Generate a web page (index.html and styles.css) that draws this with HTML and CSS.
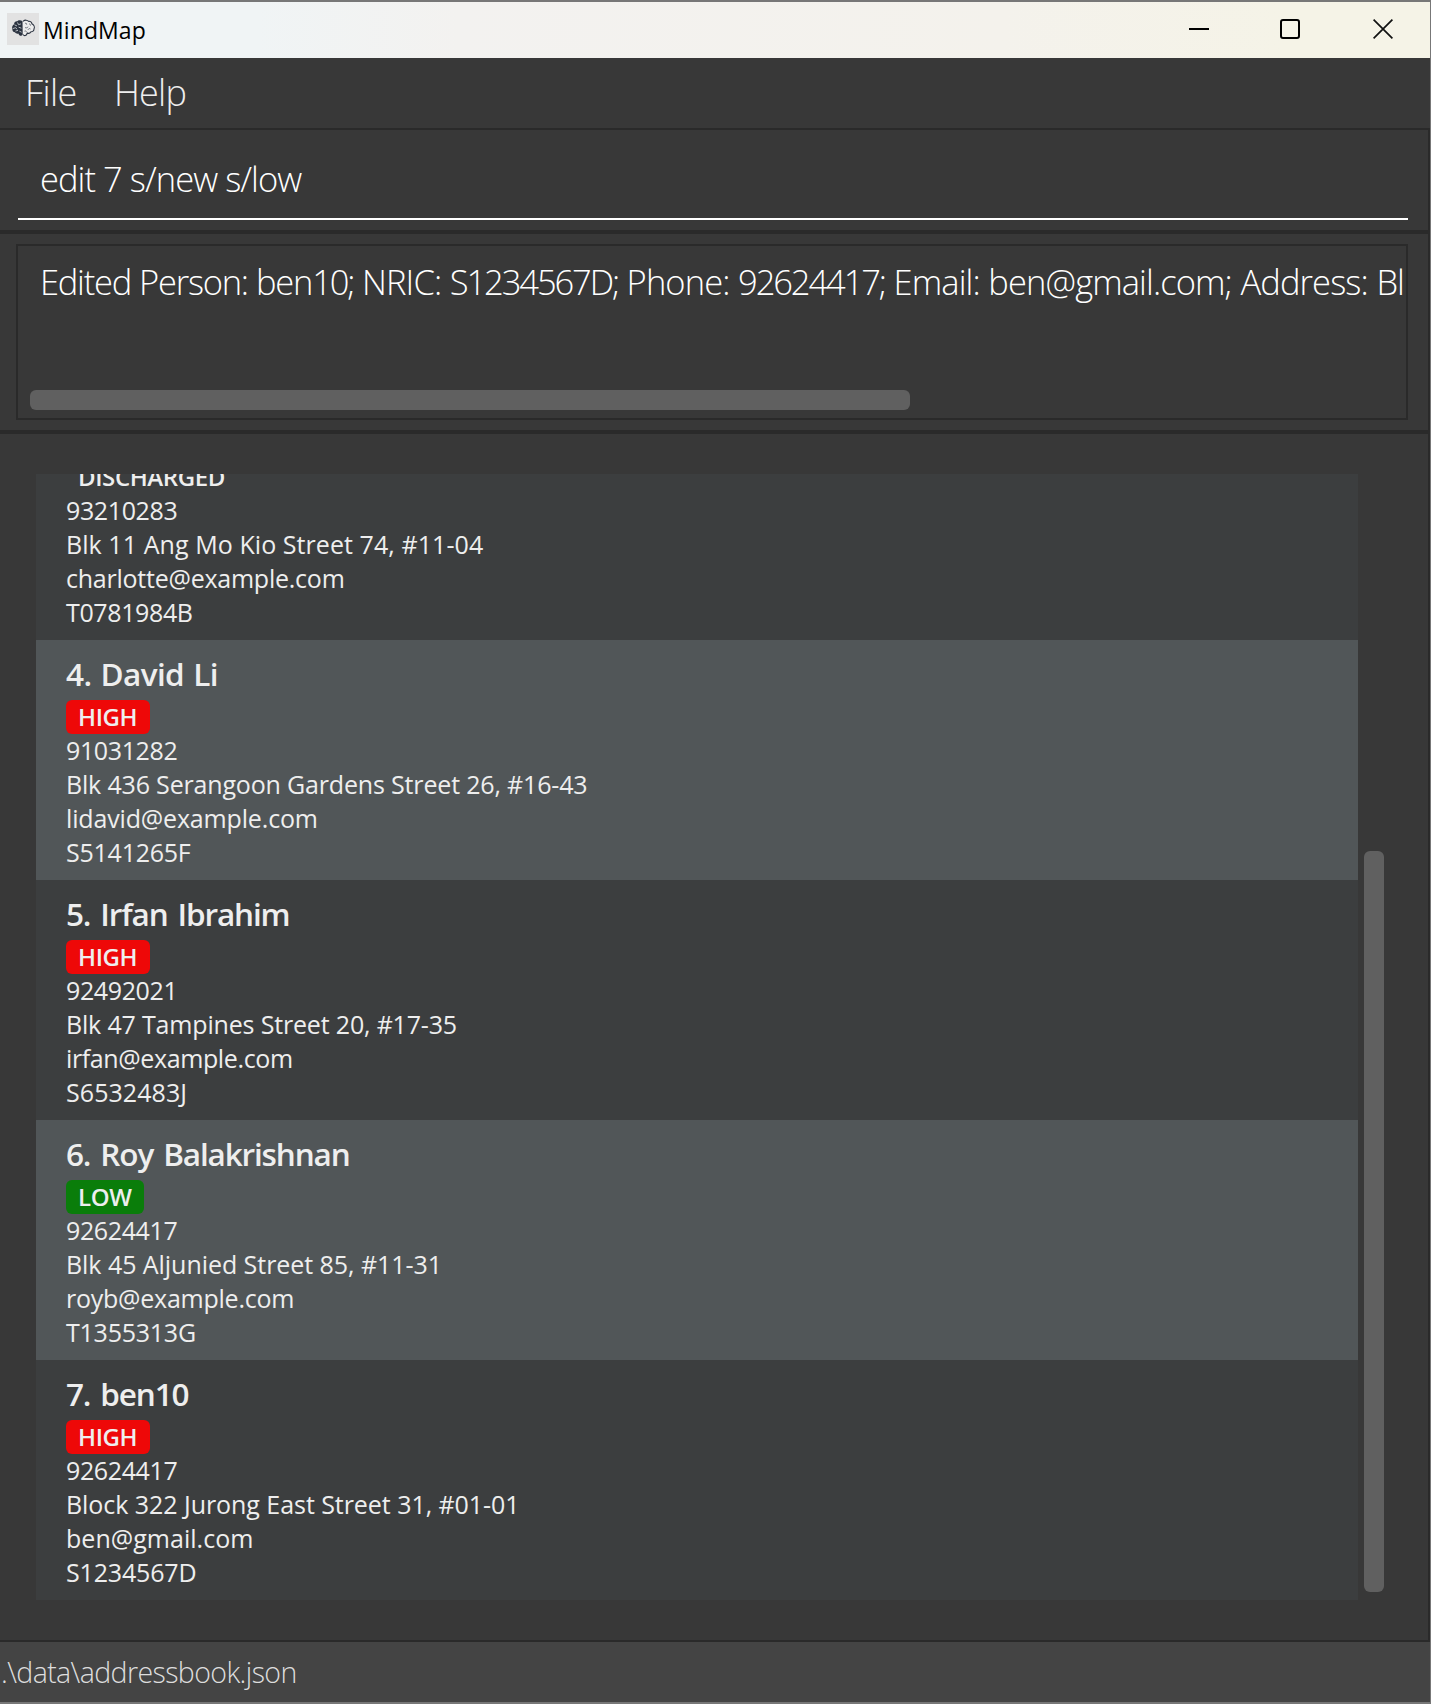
FILE: index.html
```html
<!DOCTYPE html>
<html lang="en">
<head>
<meta charset="utf-8">
<title>MindMap</title>
<link rel="stylesheet" href="styles.css">
</head>
<body>
<div class="window">
  <header class="titlebar">
    <svg class="app-icon" viewBox="0 0 32 32" width="32" height="32" aria-hidden="true">
      <rect width="32" height="32" fill="#e2e2e2"/>
      <path d="M15.500 8.200C13.500 6.600 11 7 10.200 8.300C8 8.200 6.900 9.700 7.200 11.200C5.500 12 4.600 14 5.400 15.700C5 17.600 6.300 19 8 19.200C8.800 20.700 10.500 20.900 11.400 20.400C12.200 23 14.600 23.500 15.700 21.500Z" fill="#2b3340"/>
      <path d="M7.500 11.800l2.500 1.200M10.500 9.500l1 2.200 2.400-.8M6 15.500l2.800-.8 1.200 1.600M11.600 14.200l2.800 1M8.500 18l2.500-.6M12.400 18.200l2.200 1" fill="none" stroke="#c4c8cc" stroke-width=".9"/>
      <path d="M16 8.300C18 6.600 20.600 7 21.400 8.300C23.500 8 24.800 9.300 24.900 10.800C26.800 11.800 28 14 27 16C27 17.800 25.500 18.800 24 18.700C23 20.300 21.300 20.600 20.300 20C19.500 22.800 17.400 23.500 16 21.500" fill="#ececec" stroke="#2b3340" stroke-width="1.100"/>
      <path d="M18 10.500c1.200-.8 2 .3 1.600 1.200M22 11c1.200-.2 1.700.8 1.500 1.600M18 14.500c1.300.8 2.700.3 3-.8M23.500 16c-1.200-1-2.500 0-2.300 1M17.500 18.200c1-.6 1.900 0 2 .7" fill="none" stroke="#59606a" stroke-width=".8"/>
    </svg>
    <span class="app-name">MindMap</span>
    <div class="window-buttons">
      <svg viewBox="0 0 20 20" width="20" height="20"><path d="M0 10H20" stroke="#000" stroke-width="2"/></svg>
      <svg viewBox="0 0 20 20" width="20" height="20"><rect x="1" y="1" width="18" height="18" rx="2" fill="none" stroke="#000" stroke-width="2"/></svg>
      <svg viewBox="0 0 20 20" width="20" height="20"><path d="M.6.6L19.400 19.400M19.400.6L.6 19.400" stroke="#111" stroke-width="1.700"/></svg>
    </div>
  </header>

  <nav class="menubar"><span class="menu-file">File</span><span class="menu-help">Help</span></nav>

  <section class="pane command-pane">
    <div class="command-input">edit 7 s/new s/low</div>
  </section>

  <section class="pane result-pane">
    <div class="result-box">
      <div class="result-text"><span class="lead">Edited Person: ben</span><span class="num">10;</span> NRIC: <span class="num">S1234567D;</span> Phone: <span class="num">92624417;</span> Email: ben@gmail.com; Address: Bl</div>
      <div class="h-thumb"></div>
    </div>
  </section>

  <main class="pane list-pane">
    <div class="list">
      <article class="card partial">
        <span class="badge discharged">DISCHARGED</span>
        <p class="phone">93210283</p>
        <p class="wide">Blk 11 Ang Mo Kio Street 74, #11-04</p>
        <p class="email">charlotte@example.com</p>
        <p class="phone">T0781984B</p>
      </article>
      <article class="card alt">
        <h2 class="loose">4. David Li</h2>
        <span class="badge high">HIGH</span>
        <p class="phone">91031282</p>
        <p class="address">Blk 436 Serangoon Gardens Street 26, #16-43</p>
        <p class="nric">lidavid@example.com</p>
        <p class="email">S5141265F</p>
      </article>
      <article class="card">
        <h2>5. Irfan Ibrahim</h2>
        <span class="badge high">HIGH</span>
        <p class="phone">92492021</p>
        <p class="address">Blk 47 Tampines Street 20, #17-35</p>
        <p class="phone">irfan@example.com</p>
        <p class="wide">S6532483J</p>
      </article>
      <article class="card alt">
        <h2>6. Roy Balakrishnan</h2>
        <span class="badge low">LOW</span>
        <p class="phone">92624417</p>
        <p class="close">Blk 45 Aljunied Street 85, #11-31</p>
        <p class="email">royb@example.com</p>
        <p class="email">T1355313G</p>
      </article>
      <article class="card">
        <h2>7. ben10</h2>
        <span class="badge high">HIGH</span>
        <p class="phone">92624417</p>
        <p class="close">Block 322 Jurong East Street 31, #01-01</p>
        <p class="normal">ben@gmail.com</p>
        <p class="nric">S1234567D</p>
      </article>
    </div>
    <div class="v-track"><div class="v-thumb"></div></div>
  </main>

  <footer class="statusbar">.\data\addressbook.json</footer>
</div>
</body>
</html>
```
FILE: styles.css
```css
* { box-sizing: border-box; margin: 0; padding: 0; }

body {
  font-family: "Open Sans", "Noto Sans", sans-serif;
  background: #383838;
  color: #eee;
  white-space: nowrap;
}

.window {
  display: flex;
  flex-direction: column;
  width: 1431px;
  height: 1704px;
  overflow: hidden;
  border-top: 2px solid #777;
  border-right: 1px solid #777;
  border-bottom: 2px solid #777;
}

.titlebar {
  display: flex;
  align-items: center;
  height: 56px;
  padding: 0 37px 0 7px;
  background: linear-gradient(90deg, #f0f4f5 0%, #f0f4f5 18%, #f3f2f0 32%, #f4f2ec 70%, #f5f3e7 90%);
  color: #000;
}

.app-icon { margin-top: -2px; }

.app-name {
  margin-left: 4px;
  font-size: 23px;
  letter-spacing: 0.1px;
}

.window-buttons { display: flex; margin: -2px 0 0 auto; }
.window-buttons svg { display: block; }
.window-buttons svg + svg { margin-left: 71px; }
.window-buttons svg:last-child { margin-left: 73px; }

.menubar {
  display: flex;
  height: 70px;
  padding-left: 25px;
  font-size: 36px;
  font-weight: 300;
  line-height: 70px;
}

.menu-file { width: 89px; letter-spacing: -0.6px; }
.menu-help { letter-spacing: -0.8px; }

.pane { border: 2px solid #2a2a2a; border-left: 0; }

.command-pane { height: 104px; padding: 10px 20px 0 18px; }

.command-input {
  height: 80px;
  padding-left: 22px;
  border-bottom: 2px solid #fff;
  color: #fff;
  font-size: 34.5px;
  font-weight: 300;
  line-height: 78px;
  letter-spacing: -0.95px;
}

.result-pane { height: 200px; padding: 10px 20px 10px 16px; }

.result-box {
  display: flex;
  flex-direction: column;
  justify-content: space-between;
  height: 176px;
  padding: 12px 0 8px 12px;
  border: 2px solid #2a2a2a;
}

.result-text {
  padding-left: 10px;
  color: #fff;
  font-size: 34.5px;
  font-weight: 300;
  line-height: 48px;
  letter-spacing: -0.9px;
  word-spacing: 0.5px;
}

.lead { letter-spacing: -1.25px; }
.num { letter-spacing: -2.1px; }

.h-thumb {
  width: 880px;
  height: 20px;
  border-radius: 6px;
  background: #606060;
}

.list-pane {
  display: flex;
  flex: 1;
  padding: 40px 44px 40px 36px;
}

.list { width: 1322px; overflow: hidden; }

.card {
  height: 240px;
  padding: 10px 30px 0;
  background: #3c3e3f;
}

.card.alt { background: #515658; }

.card.partial {
  height: 180px;
  margin-top: -14px;
  padding-top: 0;
}

.card h2 {
  height: 50px;
  font-size: 31.5px;
  font-weight: 600;
  line-height: 48px;
  letter-spacing: -1.15px;
  word-spacing: 3px;
}

.card h2.loose { letter-spacing: -0.6px; word-spacing: 1.5px; }

.card p { font-size: 25px; line-height: 34px; }

.badge {
  display: block;
  width: fit-content;
  height: 34px;
  margin-bottom: -1px;
  padding: 0 12px;
  border-radius: 6px;
  font-size: 24px;
  font-weight: 600;
  line-height: 34px;
  letter-spacing: -0.4px;
}

.high { width: 84px; background: #ee0808; }
.low { width: 78px; background: #0a7d0a; }

.phone { letter-spacing: -0.38px; }
.address { letter-spacing: -0.17px; }
.email { letter-spacing: -0.24px; }
.nric { letter-spacing: -0.16px; }
.close { letter-spacing: -0.05px; }
.wide { letter-spacing: 0.07px; }
.normal { letter-spacing: 0.03px; }

.v-track { width: 26px; padding: 377px 0 0 6px; }

.v-thumb {
  width: 20px;
  height: 741px;
  border-radius: 6px;
  background: #606060;
}

.statusbar {
  height: 60px;
  padding-left: 1px;
  background: #444;
  color: #ddd;
  font-size: 28.5px;
  font-weight: 300;
  line-height: 60px;
  letter-spacing: -0.6px;
}
```
